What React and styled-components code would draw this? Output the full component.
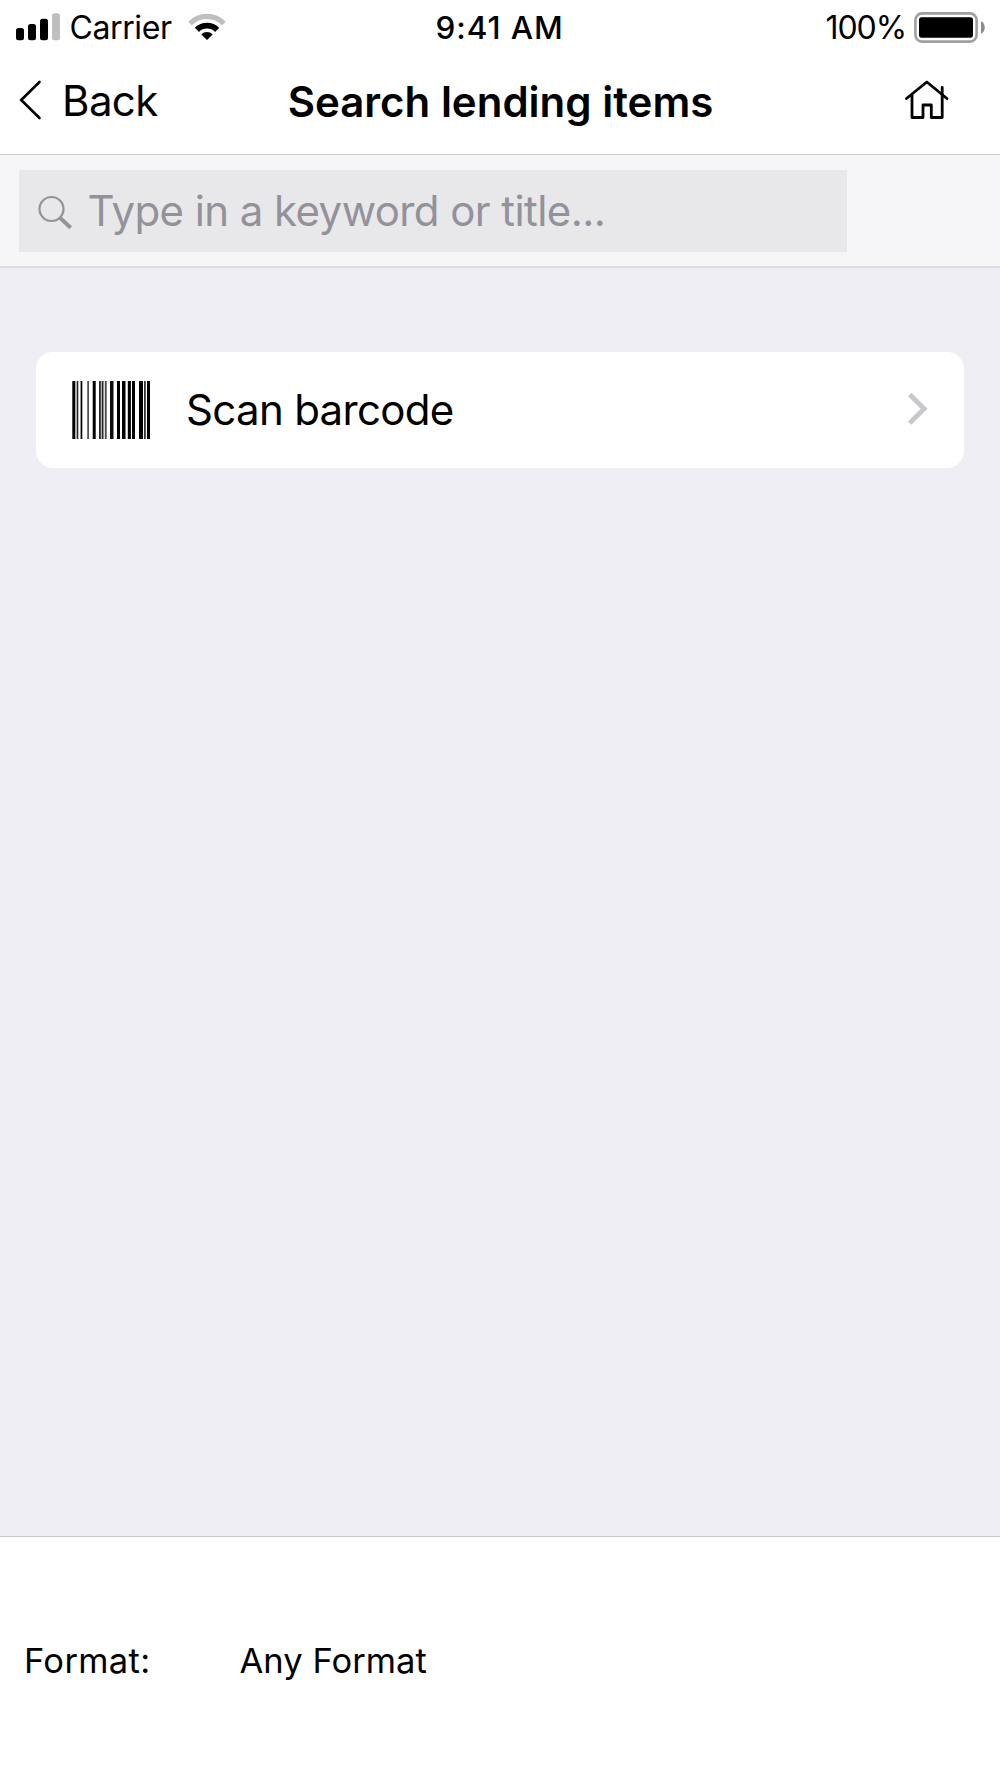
import React from "react";
import styled, { createGlobalStyle } from "styled-components";

const GlobalStyle = createGlobalStyle`
  * {
    box-sizing: border-box;
  }

  body {
    margin: 0;
    background-color: #efeef5;
    font-family: "Inter", "Liberation Sans", sans-serif;
    color: #000;
  }
`;

const Screen = styled.div`
  display: flex;
  flex-direction: column;
  width: 1000px;
  height: 1778px;
  overflow: hidden;
  background-color: #efeef5;
`;

const Text = styled.span`
  font-size: ${(props) => props.$size}px;
  font-weight: ${(props) => props.$weight || 400};
  letter-spacing: ${(props) => props.$spacing || 0}px;
  line-height: 1.2;
  white-space: nowrap;
`;

const StatusBar = styled.div`
  display: grid;
  grid-template-columns: 1fr auto 1fr;
  align-items: center;
  height: 55px;
  padding: 0 15px 0 16px;
  background-color: #fff;
`;

const StatusGroup = styled.div`
  display: flex;
  align-items: center;
  justify-content: ${(props) => (props.$end ? "flex-end" : "flex-start")};
  gap: ${(props) => props.$gap}px;
`;

const Carrier = styled.div`
  display: flex;
  padding: 1px 7px 0 0;
`;

const Clock = styled.div`
  display: flex;
  padding-right: 2px;
`;

const BatteryLevel = styled.div`
  display: flex;
  padding-top: 1px;
`;

const NavBar = styled.header`
  display: grid;
  grid-template-columns: 1fr auto 1fr;
  align-items: center;
  height: 100px;
  padding: 0 51px 8px 19px;
  background-color: #fff;
  border-bottom: 1px solid #c9c9cb;
`;

const BackButton = styled.button`
  display: flex;
  align-items: center;
  gap: 20px;
  padding: 0;
  border: none;
  background: none;
  color: inherit;
  font-family: inherit;
  cursor: pointer;
`;

const BackLabel = styled.span`
  display: flex;
  padding-top: 2px;
`;

const Title = styled.h1`
  display: flex;
  margin: 0;
  padding: 4px 0 0 33px;
`;

const HomeButton = styled.button`
  display: flex;
  justify-self: end;
  padding: 0 0 2px;
  border: none;
  background: none;
  cursor: pointer;
`;

const SearchBar = styled.div`
  height: 113px;
  padding: 15px 19px;
  background-color: #f6f6f9;
  border-bottom: 2px solid #dedee2;
`;

const SearchField = styled.div`
  display: flex;
  align-items: center;
  gap: 14.5px;
  width: 828px;
  height: 82px;
  padding-left: 19px;
  background-color: #e8e8ea;
  color: #93929a;
`;

const Content = styled.main`
  flex: 1;
  padding: 84px 36px 0;
`;

const Card = styled.div`
  display: flex;
  align-items: center;
  height: 116px;
  padding: 0 36px;
  border-radius: 17px;
  background-color: #fff;
`;

const CardLabel = styled.div`
  flex: 1;
  display: flex;
  padding-left: 35px;
`;

const Footer = styled.footer`
  display: flex;
  align-items: center;
  height: 242px;
  padding: 7px 24px 0;
  background-color: #fff;
  border-top: 1px solid #c9c9cb;
`;

const FormatLabel = styled.div`
  width: 215.5px;
`;

const Icon = styled.svg`
  display: block;
  flex: none;
`;

const SignalIcon = () => (
  <Icon width="44" height="28" viewBox="0 0 44 28">
    <rect x="0" y="15" width="8" height="12.3" rx="2.5" />
    <rect x="12" y="11" width="8" height="16.3" rx="2.5" />
    <rect x="24" y="5.7" width="8" height="21.6" rx="2.5" />
    <rect x="36" y="0.3" width="8" height="27" rx="2.5" fill="#bfbfbf" />
  </Icon>
);

const WifiIcon = () => (
  <Icon width="38" height="28" viewBox="0 0 38 28" fill="none">
    <path
      d="M2.1 10.6A23.6 23.6 0 0 1 35.9 10.6"
      stroke="#bfbfbf"
      strokeWidth="5.2"
    />
    <path
      d="M8.9 16.9A14.3 14.3 0 0 1 29.1 16.9"
      stroke="#000"
      strokeWidth="5.8"
    />
    <path d="M19 27L13.3 21.5A8 8 0 0 1 24.7 21.5Z" fill="#000" />
  </Icon>
);

const BatteryIcon = () => (
  <Icon width="71" height="31" viewBox="0 0 71 31">
    <rect
      x="1.4"
      y="1.4"
      width="61.2"
      height="28.2"
      rx="6.5"
      fill="none"
      stroke="#a0a0a0"
      strokeWidth="2.6"
    />
    <rect x="5" y="5.3" width="54" height="20.4" rx="2.6" />
    <path d="M67 9.3C72 11.6 72 19.6 67 21.9Z" fill="#8c8c8c" />
  </Icon>
);

const BackIcon = () => (
  <Icon width="23" height="40" viewBox="0 0 23 40" fill="none">
    <path
      d="M20.5 2L2.2 20L20.5 38"
      stroke="#000"
      strokeWidth="2.6"
      strokeLinecap="round"
    />
  </Icon>
);

const HomeIcon = () => (
  <Icon
    width="45"
    height="40"
    viewBox="0 0 45 40"
    fill="none"
    stroke="#000"
    strokeWidth="2.8"
    strokeLinecap="round"
    strokeLinejoin="round"
  >
    <path d="M2.5 18.5L22.8 2L43 18.5" />
    <path d="M8 15V37.5H19V25H27.3V37.5H38.2V7.5" />
  </Icon>
);

const SearchIcon = () => (
  <Icon
    width="35"
    height="35"
    viewBox="0 0 35 35"
    fill="none"
    stroke="currentColor"
  >
    <circle cx="13.5" cy="15" r="12" strokeWidth="2.2" />
    <path d="M22.3 24.1L32.7 33.7" strokeWidth="4" />
  </Icon>
);

// [x, width, opacity]
const bars = [
  [0.3, 2.8, 1],
  [3.4, 1.4, 0.4],
  [5, 1.3, 0.85],
  [8.6, 1.7, 1],
  [15.3, 1.6, 0.75],
  [20.7, 3, 1],
  [27, 1.8, 0.85],
  [28.8, 1.2, 0.3],
  [30, 1.5, 0.85],
  [32.8, 1.9, 0.7],
  [38, 3.5, 0.95],
  [45, 3, 1],
  [50, 3.5, 1],
  [55.8, 3.1, 1],
  [60, 3, 1],
  [67, 4, 1],
  [72, 1.8, 0.8],
  [75, 3, 1],
];

const BarcodeIcon = () => (
  <Icon width="79" height="58" viewBox="0 0 79 58">
    {bars.map(([x, width, opacity]) => (
      <rect key={x} x={x} y="0" width={width} height="58" opacity={opacity} />
    ))}
  </Icon>
);

const ChevronIcon = () => (
  <Icon width="20" height="34" viewBox="0 0 20 34" fill="none">
    <path d="M1.7 1.5L16.1 15.8L1.7 30.1" stroke="#c7c7cc" strokeWidth="4.8" />
  </Icon>
);

const App = () => {
  return (
    <>
      <GlobalStyle />
      <Screen>
        <StatusBar>
          <StatusGroup $gap={9.5}>
            <SignalIcon />
            <Carrier>
              <Text $size={32} $spacing={-0.4}>
                Carrier
              </Text>
            </Carrier>
            <WifiIcon />
          </StatusGroup>
          <Clock>
            <Text $size={31.5} $weight={550} $spacing={0.9}>
              9:41 AM
            </Text>
          </Clock>
          <StatusGroup $gap={8} $end>
            <BatteryLevel>
              <Text $size={32} $spacing={-1.1}>
                100%
              </Text>
            </BatteryLevel>
            <BatteryIcon />
          </StatusGroup>
        </StatusBar>

        <NavBar>
          <BackButton>
            <BackIcon />
            <BackLabel>
              <Text $size={42} $spacing={-0.6}>
                Back
              </Text>
            </BackLabel>
          </BackButton>
          <Title>
            <Text $size={42} $weight={580}>
              Search lending items
            </Text>
          </Title>
          <HomeButton aria-label="Home">
            <HomeIcon />
          </HomeButton>
        </NavBar>

        <SearchBar>
          <SearchField>
            <SearchIcon />
            <Text $size={42} $spacing={-0.58}>
              Type in a keyword or title...
            </Text>
          </SearchField>
        </SearchBar>

        <Content>
          <Card>
            <BarcodeIcon />
            <CardLabel>
              <Text $size={42} $spacing={-0.68}>
                Scan barcode
              </Text>
            </CardLabel>
            <ChevronIcon />
          </Card>
        </Content>

        <Footer>
          <FormatLabel>
            <Text $size={34.5} $spacing={0.35}>
              Format:
            </Text>
          </FormatLabel>
          <Text $size={34.5} $spacing={0.05}>
            Any Format
          </Text>
        </Footer>
      </Screen>
    </>
  );
};

export default App;
